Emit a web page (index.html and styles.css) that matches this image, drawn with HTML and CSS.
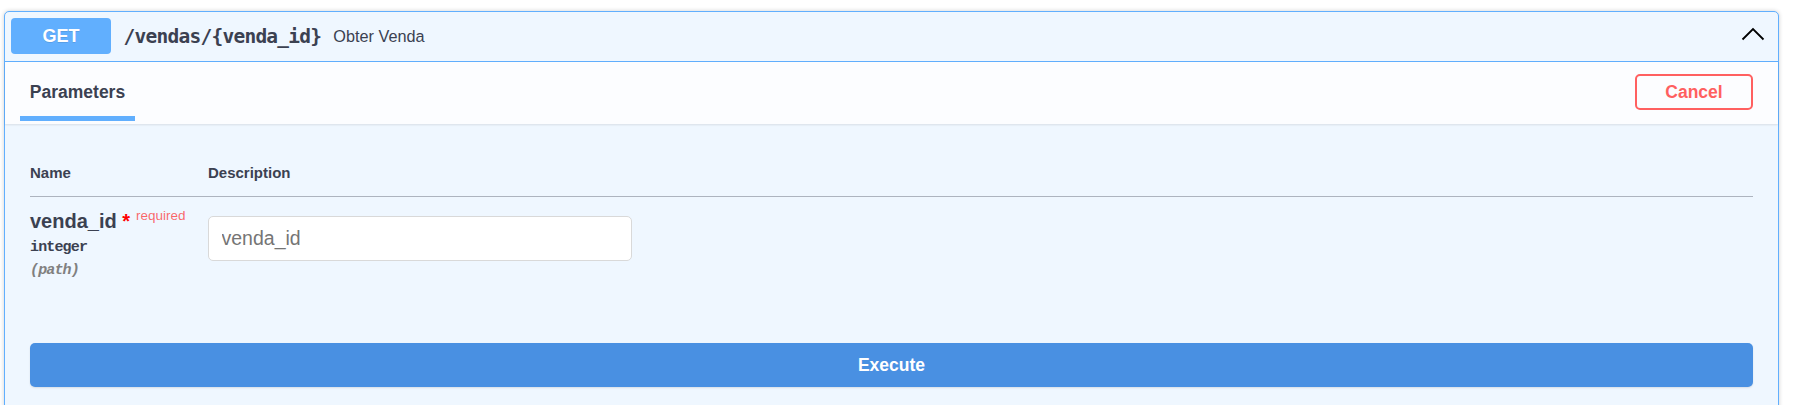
FILE: index.html
```html
<!DOCTYPE html>
<html lang="pt">
<head>
<meta charset="utf-8">
<title>GET /vendas/{venda_id}</title>
<link rel="stylesheet" href="styles.css">
</head>
<body>
<div class="page">
  <div class="opblock">
    <div class="summary">
      <span class="method">GET</span>
      <span class="path">/vendas/{venda_id}</span>
      <span class="summary-desc">Obter Venda</span>
      <svg class="arrow" width="24" height="14" viewBox="0 0 24 14" aria-hidden="true">
        <polyline points="1.5,12.5 12,2 22.5,12.5" fill="none" stroke="#000" stroke-width="1.8" stroke-linejoin="miter"/>
      </svg>
    </div>
    <div class="section-header">
      <div class="tab">
        <h4 class="tab-title">Parameters</h4>
        <span class="tab-bar"></span>
      </div>
      <button class="btn-cancel" type="button">Cancel</button>
    </div>
    <div class="params">
      <table class="param-table">
        <thead>
          <tr>
            <th class="col-name">Name</th>
            <th class="col-desc">Description</th>
          </tr>
        </thead>
        <tbody>
          <tr>
            <td class="col-name">
              <div class="param-name">venda_id<span class="star">&nbsp;*</span><span class="req">required</span></div>
              <div class="param-type">integer</div>
              <div class="param-in">(path)</div>
            </td>
            <td class="col-desc">
              <input class="param-input" type="text" placeholder="venda_id">
            </td>
          </tr>
        </tbody>
      </table>
    </div>
    <div class="execute-wrapper">
      <button class="btn-execute" type="button">Execute</button>
    </div>
  </div>
</div>
</body>
</html>
```
FILE: styles.css
```css
* { box-sizing: border-box; }

html, body {
  margin: 0;
  padding: 0;
  background: #ffffff;
  font-family: "Liberation Sans", Arial, sans-serif;
  color: #3b4151;
}

.page {
  height: 405px;
  overflow: hidden;
  padding: 11px 0 0 4px;
}

.opblock {
  width: 1775px;
  border: 1px solid #61affe;
  border-radius: 5px;
  background: #eff7ff;
  box-shadow: 0 0 4px rgba(0, 0, 0, 0.19);
}

/* summary */
.summary {
  display: flex;
  align-items: center;
  padding: 6px 6px 7px 6px;
  border-bottom: 1px solid #61affe;
}

.method {
  width: 100px;
  height: 36px;
  display: flex;
  align-items: center;
  justify-content: center;
  background: #61affe;
  border-radius: 4px;
  color: #fff;
  font-size: 18px;
  font-weight: 700;
  text-shadow: 0 1px 0 rgba(0, 0, 0, 0.1);
}

.path {
  padding: 0 12px 0 12.5px;
  font-family: "DejaVu Sans Mono", "Liberation Mono", monospace;
  font-size: 19.5px;
  font-weight: 700;
  letter-spacing: -0.75px;
  color: #3b4151;
}

.summary-desc {
  flex: 1;
  font-size: 16.25px;
  color: #3b4151;
}

.arrow {
  margin-right: 7px;
  margin-bottom: 5px;
}

/* section header */
.section-header {
  display: flex;
  justify-content: space-between;
  align-items: center;
  height: 62px;
  padding: 0 25px 0 15px;
  background: #fcfdff;
  box-shadow: 0 1px 2px rgba(0, 0, 0, 0.1);
  position: relative;
}

.tab {
  align-self: flex-end;
  display: flex;
  flex-direction: column;
  align-items: center;
  margin-bottom: 3px;
}

.tab-title {
  margin: 0;
  font-size: 17.5px;
  line-height: 20px;
  font-weight: 700;
  color: #3b4151;
}

.tab-bar {
  display: block;
  width: 115px;
  height: 5px;
  margin-top: 14px;
  background: #61affe;
}

.btn-cancel {
  width: 118px;
  height: 36px;
  margin-bottom: 2px;
  border: 2px solid #ff6060;
  border-radius: 5px;
  background: transparent;
  color: #ff6060;
  font-family: "Liberation Sans", Arial, sans-serif;
  font-size: 17.5px;
  font-weight: 700;
  padding: 0;
}

/* parameters */
.params {
  padding: 25px 25px 64px 25px;
}

.param-table {
  width: 100%;
  border-collapse: collapse;
}

.param-table th {
  text-align: left;
  font-size: 15px;
  font-weight: 700;
  color: #3b4151;
  padding: 15px 0;
  border-bottom: 1px solid #adb4bf;
}

.param-table th.col-name,
.param-table td.col-name {
  width: 178px;
}

.param-table td {
  vertical-align: top;
  padding: 12.5px 0 0 0;
}

.param-name {
  font-size: 20px;
  font-weight: 700;
  color: #3b4151;
  white-space: nowrap;
}

.star {
  color: #ff0000;
}

.req {
  position: relative;
  top: -7.5px;
  padding-left: 6px;
  font-size: 13.5px;
  font-weight: 400;
  color: rgba(255, 0, 0, 0.6);
}

.param-type {
  padding: 6.25px 0;
  font-family: "Liberation Mono", "DejaVu Sans Mono", monospace;
  font-size: 15px;
  font-weight: 700;
  letter-spacing: -0.85px;
  color: #3b4151;
}

.param-in {
  font-family: "Liberation Mono", "DejaVu Sans Mono", monospace;
  font-size: 15px;
  font-style: italic;
  font-weight: 700;
  letter-spacing: -0.85px;
  color: #808080;
}

.param-input {
  display: block;
  margin-top: 6.5px;
  width: 424px;
  height: 45px;
  padding: 0 12.5px;
  border: 1px solid #d9d9d9;
  border-radius: 5px;
  background: #fff;
  font-family: "Liberation Sans", Arial, sans-serif;
  font-size: 19.5px;
  color: #3b4151;
  outline: none;
}

.param-input::placeholder {
  color: #757575;
}

/* execute */
.execute-wrapper {
  padding: 0 25px 25px 25px;
}

.btn-execute {
  display: block;
  width: 100%;
  height: 44px;
  border: none;
  border-radius: 5px;
  background: #4990e2;
  color: #fff;
  font-family: "Liberation Sans", Arial, sans-serif;
  font-size: 17.5px;
  font-weight: 700;
  box-shadow: 0 1px 2px rgba(0, 0, 0, 0.1);
  padding: 0;
}
```
